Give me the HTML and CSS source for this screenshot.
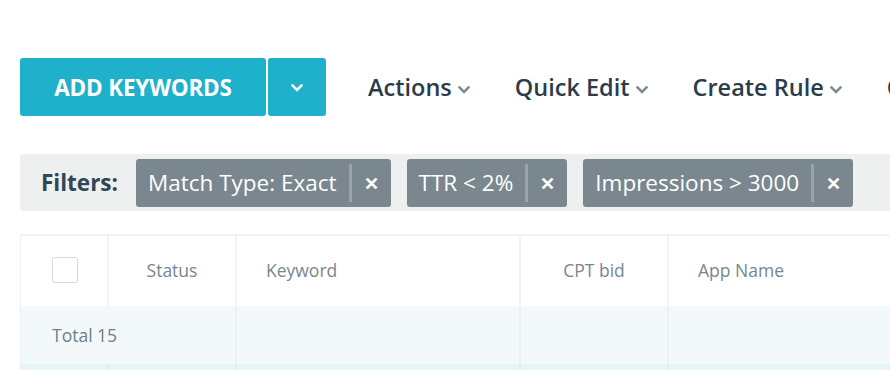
FILE: index.html
```
<!DOCTYPE html>
<html>
	<head>
		<link rel="stylesheet" href="styles.css">
	</head>
	<body>

	<div class="page">
		<div class="toolbar">
			<div class="btn-group">
				<button class="btn-primary">ADD KEYWORDS</button>
				<button class="btn-split">
					<svg class="chev" width="12" height="8" viewBox="0 0 12 8"><path d="M1.5 1.5 L6 6 L10.5 1.5" /></svg>
				</button>
			</div>
			<div class="menu">
				<span class="menu-item">Actions<svg class="chev" width="12" height="8" viewBox="0 0 12 8"><path d="M1.5 1.5 L6 6 L10.5 1.5" /></svg></span>
				<span class="menu-item">Quick Edit<svg class="chev" width="12" height="8" viewBox="0 0 12 8"><path d="M1.5 1.5 L6 6 L10.5 1.5" /></svg></span>
				<span class="menu-item">Create Rule<svg class="chev" width="12" height="8" viewBox="0 0 12 8"><path d="M1.5 1.5 L6 6 L10.5 1.5" /></svg></span>
				<span class="menu-item">Columns<svg class="chev" width="12" height="8" viewBox="0 0 12 8"><path d="M1.5 1.5 L6 6 L10.5 1.5" /></svg></span>
			</div>
		</div>

		<div class="filters">
			<span class="filters-label">Filters:</span>
			<span class="chip"><span class="chip-text">Match Type: Exact</span><span class="chip-x">&#x2715;</span></span>
			<span class="chip"><span class="chip-text">TTR &lt; 2%</span><span class="chip-x">&#x2715;</span></span>
			<span class="chip"><span class="chip-text">Impressions &gt; 3000</span><span class="chip-x">&#x2715;</span></span>
		</div>

		<div class="grid">
			<div class="cell head center"><span class="checkbox"></span></div>
			<div class="cell head center">Status</div>
			<div class="cell head">Keyword</div>
			<div class="cell head center">CPT bid</div>
			<div class="cell head">App Name</div>

			<div class="cell total wide">Total 15</div>
			<div class="cell total"></div>
			<div class="cell total"></div>
			<div class="cell total"></div>

			<div class="cell row"></div>
			<div class="cell row"></div>
			<div class="cell row"></div>
			<div class="cell row"></div>
			<div class="cell row"></div>
		</div>
	</div>

	</body>
</html>
```

FILE: styles.css
```
body {
	margin: 0;
	width: 890px;
	height: 370px;
	overflow: hidden;
	font-family: "Open Sans", "Liberation Sans", sans-serif;
	background-color: white;
}

.page {
	padding-left: 20px;
	padding-top: 58px;
	width: 1100px;
}

/* toolbar */
.toolbar {
	display: flex;
	align-items: center;
	height: 58px;
}

.btn-group {
	display: flex;
	gap: 2px;
}

.btn-primary,
.btn-split {
	border: none;
	background-color: #1fb0cb;
	color: white;
	height: 58px;
	border-radius: 3px;
	font-family: inherit;
	cursor: pointer;
}
.btn-primary {
	width: 246px;
	font-size: 22.5px;
	font-weight: 700;
	letter-spacing: -0.2px;
	padding: 0;
}
.btn-split {
	width: 58px;
	display: flex;
	align-items: center;
	justify-content: center;
	padding: 0;
}
.btn-split .chev {
	stroke: white;
	margin-top: 2px;
}

.chev {
	fill: none;
	stroke: #7d8d97;
	stroke-width: 2.6;
	stroke-linecap: square;
}

.menu {
	display: flex;
	gap: 45px;
	margin-left: 42px;
}
.menu-item {
	display: flex;
	align-items: center;
	gap: 6px;
	font-size: 23.5px;
	font-weight: 600;
	color: #2b3d4a;
	white-space: nowrap;
}
.menu-item .chev {
	margin-top: 5px;
}

/* filter bar */
.filters {
	display: flex;
	align-items: center;
	gap: 16px;
	margin-top: 38px;
	height: 57px;
	padding-left: 21px;
	background-color: #eef0f0;
	border-radius: 3px 0 0 3px;
}
.filters-label {
	font-size: 22.5px;
	font-weight: 700;
	color: #2e4656;
	margin-right: 2px;
}
.chip {
	display: flex;
	align-items: center;
	height: 48px;
	background-color: #7a878f;
	border-radius: 3px;
	color: white;
	font-size: 22.5px;
}
.chip-text {
	padding: 0 12px 0 12px;
	line-height: 38px;
	border-right: 3px solid #9aa5ab;
}
.chip-x {
	width: 39px;
	text-align: center;
	font-size: 18px;
	font-weight: 700;
}

/* table */
.grid {
	display: grid;
	grid-template-columns: 88px 128px 284px 148px 1fr;
	grid-template-rows: 70px 58px 40px;
	margin-top: 23px;
	border-top: 2px solid #f1f3f4;
	border-left: 1px solid #eceff0;
}
.cell {
	display: flex;
	align-items: center;
	border-right: 2px solid #f1f3f4;
	padding-left: 29px;
	font-size: 17.5px;
	color: #77868f;
	white-space: nowrap;
}
.cell.head {
	padding-bottom: 3px;
}
.cell.center {
	justify-content: center;
	padding-left: 0;
}
.cell.total {
	background-color: #f3f9fa;
	color: #6f7e88;
	padding-left: 31px;
	border-right-color: #ecf2f4;
}
.cell.wide {
	grid-column: span 2;
}
.cell.row {
	background-color: #e6f5f8;
	border-right-color: #e0eef1;
}

.checkbox {
	display: block;
	width: 24px;
	height: 24px;
	border: 1px solid #d3d9dd;
	border-radius: 3px;
	background-color: white;
	margin-left: 2px;
}
```
